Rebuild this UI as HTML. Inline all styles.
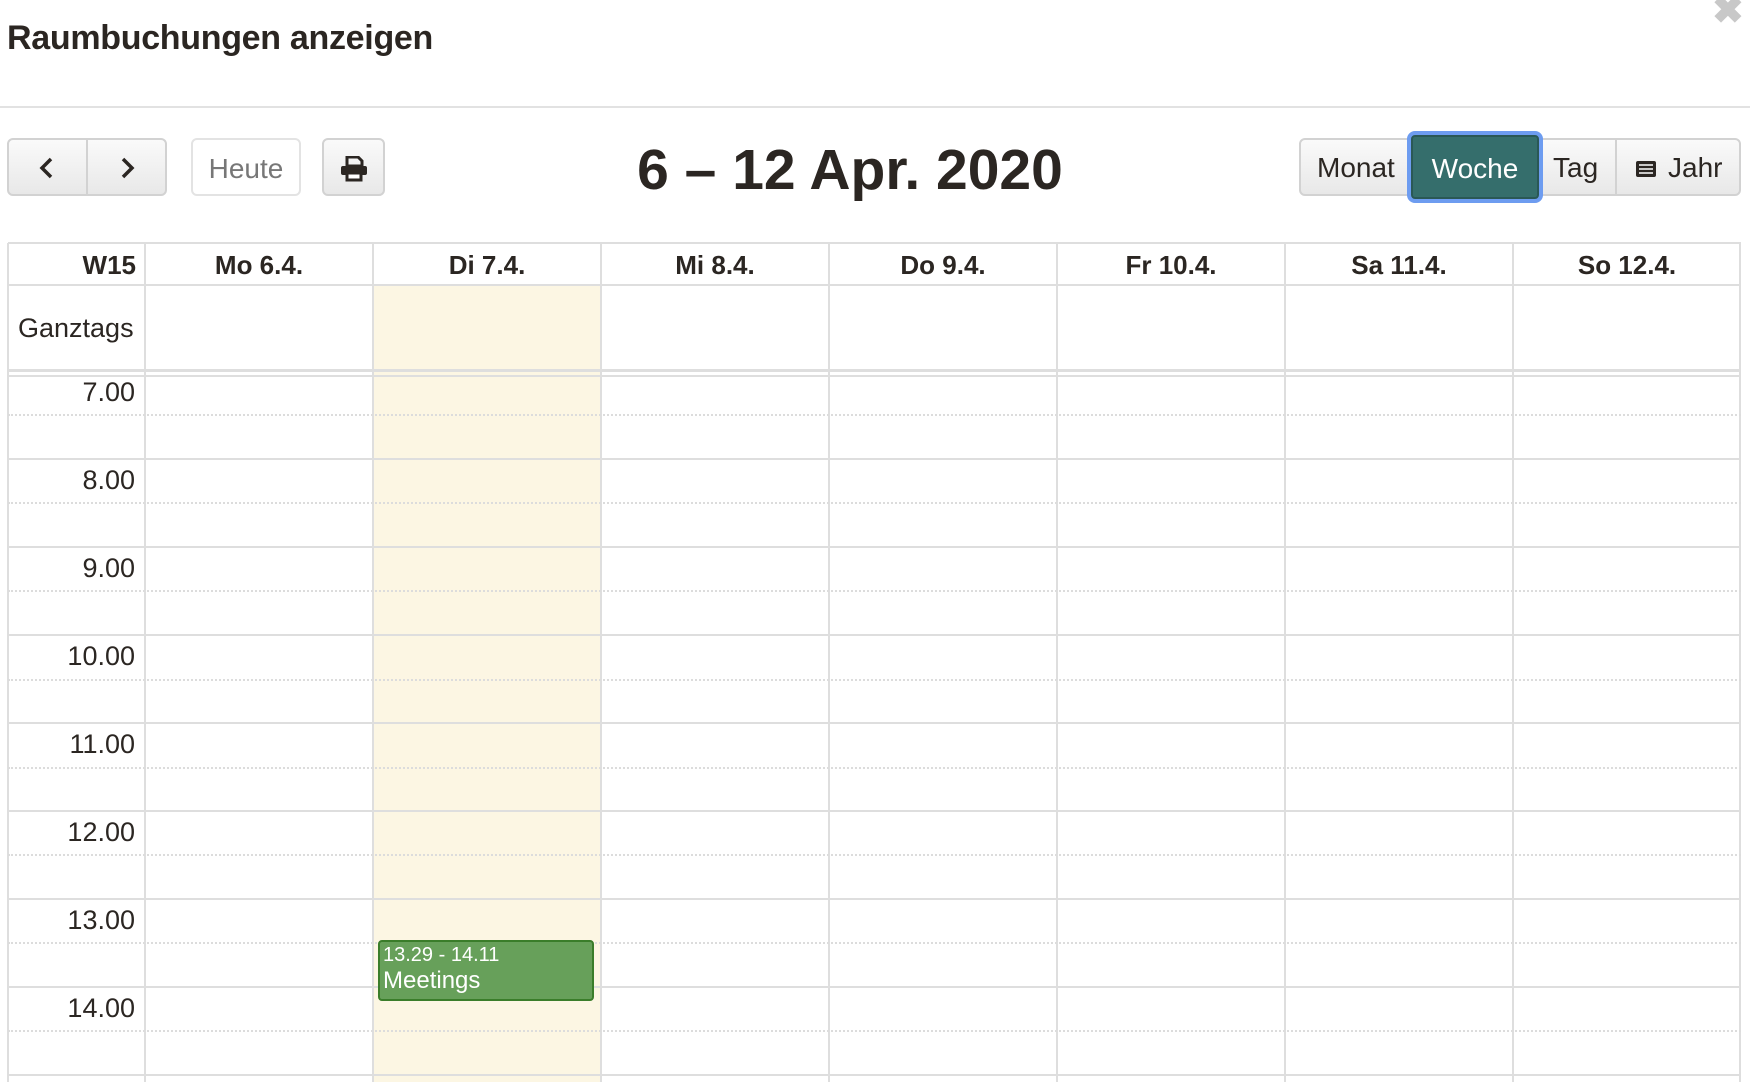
<!DOCTYPE html>
<html><head><meta charset="utf-8"><style>
*{box-sizing:border-box;margin:0;padding:0}
body{width:1750px;height:1082px;background:#fff;font-family:"Liberation Sans",Arial,sans-serif;color:#2b2622;position:relative;overflow:hidden}
.a{position:absolute}
.btn{position:absolute;top:138px;height:58px;border:2px solid #d2d2d2;border-radius:6px;background:linear-gradient(#fafafa,#e8e8e8);display:flex;align-items:center;justify-content:center;font-size:28px;color:#2b2622;padding-top:3px}
.hl{position:absolute;left:8px;width:1733px;height:2px;background:#dedede}
.dl{position:absolute;left:8px;width:1733px;border-top:2px dotted #dcdcdc}
.vl{position:absolute;top:243px;width:2px;height:839px;background:#dedede}
.dh{position:absolute;top:244px;height:42px;width:228px;font-weight:bold;font-size:26px;display:flex;align-items:center;justify-content:center}
.hr{position:absolute;left:8px;width:127px;text-align:right;font-size:27px}
</style></head><body>
<div class="a" style="left:7px;top:19px;font-size:34px;font-weight:bold;letter-spacing:-0.3px">Raumbuchungen anzeigen</div>
<div class="a" style="left:1712px;top:-12px;font-size:38px;color:#c8c8c8;font-weight:bold">✖</div>
<div class="a" style="left:0;top:106px;width:1750px;height:2px;background:#e2e2e2"></div>

<div class="btn" style="left:7px;width:160px;"></div>
<div class="a" style="left:86px;top:140px;width:2px;height:54px;background:#d2d2d2"></div>
<svg class="a" style="left:36px;top:156px" width="22" height="24"><path d="M15 3 L6 12 L15 21" stroke="#2b2622" stroke-width="3.5" fill="none"/></svg>
<svg class="a" style="left:117px;top:156px" width="22" height="24"><path d="M6 3 L15 12 L6 21" stroke="#2b2622" stroke-width="3.5" fill="none"/></svg>
<div class="btn" style="left:191px;width:110px;background:#fff;border-color:#e3e3e3;color:#777">Heute</div>
<div class="btn" style="left:322px;width:63px;">
<svg width="28" height="26" viewBox="0 0 28 26"><path d="M7 1h11l4 4v5H7z" fill="none" stroke="#2b2622" stroke-width="3"/><rect x="1" y="10" width="26" height="9" rx="2" fill="#2b2622"/><rect x="7" y="17" width="14" height="7" fill="#fff" stroke="#2b2622" stroke-width="3"/></svg></div>

<div class="a" style="left:560px;top:137px;width:580px;text-align:center;font-size:57px;font-weight:bold">6 – 12 Apr. 2020</div>

<div class="btn" style="left:1299px;width:442px"></div>
<div class="a" style="left:1317px;top:152px;font-size:28px">Monat</div>
<div class="a" style="left:1615px;top:140px;width:2px;height:54px;background:#d2d2d2"></div>
<div class="a" style="left:1553px;top:152px;font-size:28px">Tag</div>
<svg class="a" style="left:1635px;top:160px" width="22" height="18"><rect x="1" y="1" width="20" height="16" rx="2" fill="#2b2622"/><path d="M4 5h14M4 9h14M4 13h14" stroke="#fff" stroke-width="1.5"/></svg>
<div class="a" style="left:1668px;top:152px;font-size:28px">Jahr</div>
<div class="a" style="left:1407px;top:131px;width:136px;height:72px;border:4px solid #6d9cf0;border-radius:8px;background:#356e6c;box-shadow:inset 0 0 0 2px #2a5856;color:#fff;font-size:28px;display:flex;align-items:center;justify-content:center;padding-top:3px">Woche</div>

<div class="a" style="left:373px;top:285px;width:228px;height:797px;background:#fcf6e3"></div>
<div class="hl" style="top:242px"></div>
<div class="hl" style="top:284px"></div>
<div class="hl" style="top:369px;height:3px"></div>
<div class="hl" style="top:375px"></div>
<div class="vl" style="left:7px"></div>
<div class="vl" style="left:144px"></div>
<div class="vl" style="left:372px"></div>
<div class="vl" style="left:600px"></div>
<div class="vl" style="left:828px"></div>
<div class="vl" style="left:1056px"></div>
<div class="vl" style="left:1284px"></div>
<div class="vl" style="left:1512px"></div>
<div class="vl" style="left:1739px"></div>

<div class="a" style="left:8px;top:244px;width:128px;height:42px;text-align:right;font-weight:bold;font-size:26px;line-height:42px">W15</div>
<div class="dh" style="left:145px">Mo 6.4.</div>
<div class="dh" style="left:373px">Di 7.4.</div>
<div class="dh" style="left:601px">Mi 8.4.</div>
<div class="dh" style="left:829px">Do 9.4.</div>
<div class="dh" style="left:1057px">Fr 10.4.</div>
<div class="dh" style="left:1285px">Sa 11.4.</div>
<div class="dh" style="left:1513px">So 12.4.</div>
<div class="a" style="left:18px;top:313px;font-size:27px">Ganztags</div>

<div class="dl" style="top:414px"></div>
<div class="hl" style="top:458px"></div>
<div class="dl" style="top:502px"></div>
<div class="hl" style="top:546px"></div>
<div class="dl" style="top:590px"></div>
<div class="hl" style="top:634px"></div>
<div class="dl" style="top:679px"></div>
<div class="hl" style="top:722px"></div>
<div class="dl" style="top:767px"></div>
<div class="hl" style="top:810px"></div>
<div class="dl" style="top:854px"></div>
<div class="hl" style="top:898px"></div>
<div class="dl" style="top:942px"></div>
<div class="hl" style="top:986px"></div>
<div class="dl" style="top:1030px"></div>
<div class="hl" style="top:1074px"></div>

<div class="hr" style="top:377px">7.00</div>
<div class="hr" style="top:465px">8.00</div>
<div class="hr" style="top:553px">9.00</div>
<div class="hr" style="top:641px">10.00</div>
<div class="hr" style="top:729px">11.00</div>
<div class="hr" style="top:817px">12.00</div>
<div class="hr" style="top:905px">13.00</div>
<div class="hr" style="top:993px">14.00</div>

<div class="a" style="left:378px;top:940px;width:216px;height:61px;background:#67a05a;border:2px solid #3a7d2a;border-radius:4px;color:#fff;padding:2px 3px">
<div style="font-size:20px;line-height:22px">13.29 - 14.11</div>
<div style="font-size:24px;line-height:29px">Meetings</div></div>
</body></html>
